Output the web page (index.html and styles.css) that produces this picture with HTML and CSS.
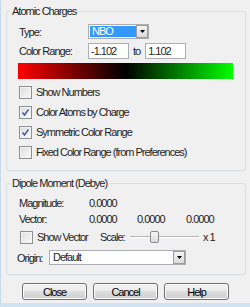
FILE: index.html
```html
<!DOCTYPE html>
<html lang="en">
	<head>
		<meta charset="UTF-8" />
		<title>Atomic Charges</title>
		<link rel="stylesheet" href="styles.css">
	</head>
	<body>
		<div class="window">
			<fieldset class="group charges">
				<legend>Atomic Charges</legend>
				<div class="inner">
					<div class="field type-row">
						<span class="label">Type:</span>
						<div class="combo combo-type">
							<span class="combo-value selected">NBO</span>
							<span class="combo-btn"><svg width="5" height="3" viewBox="0 0 5 3"><polygon points="0,0 5,0 2.5,3" fill="#000"/></svg></span>
						</div>
					</div>
					<div class="field range-row">
						<span class="label">Color Range:</span>
						<span class="textbox">-1.102</span>
						<span class="to">to</span>
						<span class="textbox">1.102</span>
					</div>
					<div class="gradient"></div>
					<div class="checks">
						<label class="check"><span class="box"></span>Show Numbers</label>
						<label class="check"><span class="box"><svg width="9" height="9" viewBox="0 0 9 9"><path d="M1.5 4.5 L3.5 7 L7.5 1.5" fill="none" stroke="#3d5b98" stroke-width="1.4"/></svg></span>Color Atoms by Charge</label>
						<label class="check"><span class="box"><svg width="9" height="9" viewBox="0 0 9 9"><path d="M1.5 4.5 L3.5 7 L7.5 1.5" fill="none" stroke="#3d5b98" stroke-width="1.4"/></svg></span>Symmetric Color Range</label>
						<label class="check"><span class="box"></span>Fixed Color Range (from Preferences)</label>
					</div>
				</div>
			</fieldset>

			<fieldset class="group dipole">
				<legend>Dipole Moment (Debye)</legend>
				<div class="inner">
					<div class="readout magnitude">
						<span class="label">Magnitude:</span>
						<span class="num">0.0000</span>
					</div>
					<div class="readout">
						<span class="label">Vector:</span>
						<span class="num">0.0000</span>
						<span class="num">0.0000</span>
						<span class="num">0.0000</span>
					</div>
					<div class="vector-row">
						<label class="check show-vector"><span class="box"></span>Show Vector</label>
						<span class="scale-label">Scale:</span>
						<div class="slider"><span class="thumb"></span></div>
						<span class="scale-value">x 1</span>
					</div>
					<div class="origin-row">
						<span class="origin-label">Origin:</span>
						<div class="combo combo-origin">
							<span class="combo-value">Default</span>
							<span class="combo-btn"><svg width="5" height="3" viewBox="0 0 5 3"><polygon points="0,0 5,0 2.5,3" fill="#000"/></svg></span>
						</div>
					</div>
				</div>
			</fieldset>

			<div class="buttons">
				<button type="button">Close</button>
				<button type="button">Cancel</button>
				<button type="button">Help</button>
			</div>
		</div>
	</body>
</html>
```

FILE: styles.css
```css
html,
body {
	margin: 0;
	background: #f0f0f0;
	color: #1e1e1e;
	font-family: "Liberation Sans", Arial, sans-serif;
	font-size: 11px;
	letter-spacing: -1px;
}
.window {
	width: 250px;
	height: 307px;
	box-sizing: border-box;
	padding-top: 5px;
	border-left: 1px solid #c8d9ec;
	border-bottom: 4px solid #d3e2f2;
	display: flex;
	flex-direction: column;
	overflow: hidden;
}
.group {
	margin: 0 0 0 5px;
	width: 240px;
	min-inline-size: 0;
	box-sizing: border-box;
	border: 1px solid #d5dfe5;
	border-radius: 3px;
	padding: 0 0 8px;
}
.group legend {
	margin-left: 3px;
	padding: 0 2px;
	line-height: 13px;
}
.inner {
	padding-left: 12px;
	display: flex;
	flex-direction: column;
}
.field {
	display: flex;
	align-items: center;
}
.label {
	width: 69px;
	flex: none;
}
.type-row {
	margin-top: 6px;
	height: 15px;
}
.range-row {
	margin-top: 4px;
	height: 16px;
}
.combo {
	display: flex;
	box-sizing: border-box;
	height: 15px;
	background: #fff;
	border: 1px solid #abadb3;
	padding: 1px;
}
.combo-type {
	width: 61px;
}
.combo-value {
	flex: 1;
	line-height: 11px;
	padding-left: 2px;
}
.combo-value.selected {
	background: #3399ff;
	color: #fff;
}
.combo-btn {
	width: 12px;
	box-sizing: border-box;
	border: 1px solid #9c9c9c;
	background: linear-gradient(#f4f4f4, #dcdcdc);
	display: flex;
	align-items: center;
	justify-content: center;
	margin: -1px -1px -1px 0;
}
.textbox {
	box-sizing: border-box;
	width: 41px;
	height: 16px;
	line-height: 14px;
	padding-left: 2px;
	background: #fff;
	border: 1px solid #abadb3;
}
.to {
	margin: 0 5px 0 4px;
}
.gradient {
	margin-top: 4px;
	width: 215px;
	height: 16px;
	margin-left: -1px;
	background: linear-gradient(to right, #ff0000, #000 50%, #00ff00);
}
.checks {
	margin-top: 3px;
	display: flex;
	flex-direction: column;
}
.check {
	display: flex;
	align-items: center;
	height: 20px;
}
.box {
	box-sizing: border-box;
	width: 13px;
	height: 13px;
	margin-right: 4px;
	border: 1px solid #8e8f8f;
	background: linear-gradient(135deg, #dcdcdc, #fbfbfb);
	box-shadow: inset 0 0 0 1px #f4f4f4;
	display: flex;
	align-items: center;
	justify-content: center;
}
.dipole {
	margin-top: 6px;
	padding-bottom: 9px;
}
.readout {
	display: flex;
	align-items: center;
	height: 16px;
}
.magnitude {
	margin-top: 5px;
}
.readout .label {
	width: 70px;
}
.num {
	width: 48px;
}
.num + .num {
	width: 49px;
}
.vector-row {
	margin-top: 1px;
	height: 18px;
	display: flex;
	align-items: center;
}
.show-vector {
	width: 80px;
	margin-left: 1px;
}
.scale-label {
	width: 30px;
}
.slider {
	width: 69px;
	height: 12px;
	display: flex;
	background: linear-gradient(transparent 5px, #b5b5b5 5px, #b5b5b5 6px, #fff 6px, #fff 7px, transparent 7px);
}
.thumb {
	margin-left: 20px;
	box-sizing: border-box;
	width: 9px;
	height: 12px;
	border: 1px solid #8c8c8c;
	border-radius: 2px;
	background: linear-gradient(#f6f6f6, #dcdcdc);
}
.scale-value {
	margin-left: 4px;
}
.origin-row {
	margin-top: 4px;
	margin-left: -2px;
	display: flex;
	align-items: center;
}
.origin-label {
	width: 32px;
}
.combo-origin {
	width: 137px;
}
.buttons {
	margin-top: 8px;
	display: flex;
	justify-content: center;
	gap: 6px;
}
button {
	width: 65px;
	height: 17px;
	padding: 0;
	font: inherit;
	letter-spacing: inherit;
	color: #000;
	border: 1px solid #707070;
	border-radius: 3px;
	background: linear-gradient(#f2f2f2, #ebebeb 50%, #dddddd 50%, #cfcfcf);
	box-shadow: inset 0 0 0 1px #fcfcfc;
}
```
